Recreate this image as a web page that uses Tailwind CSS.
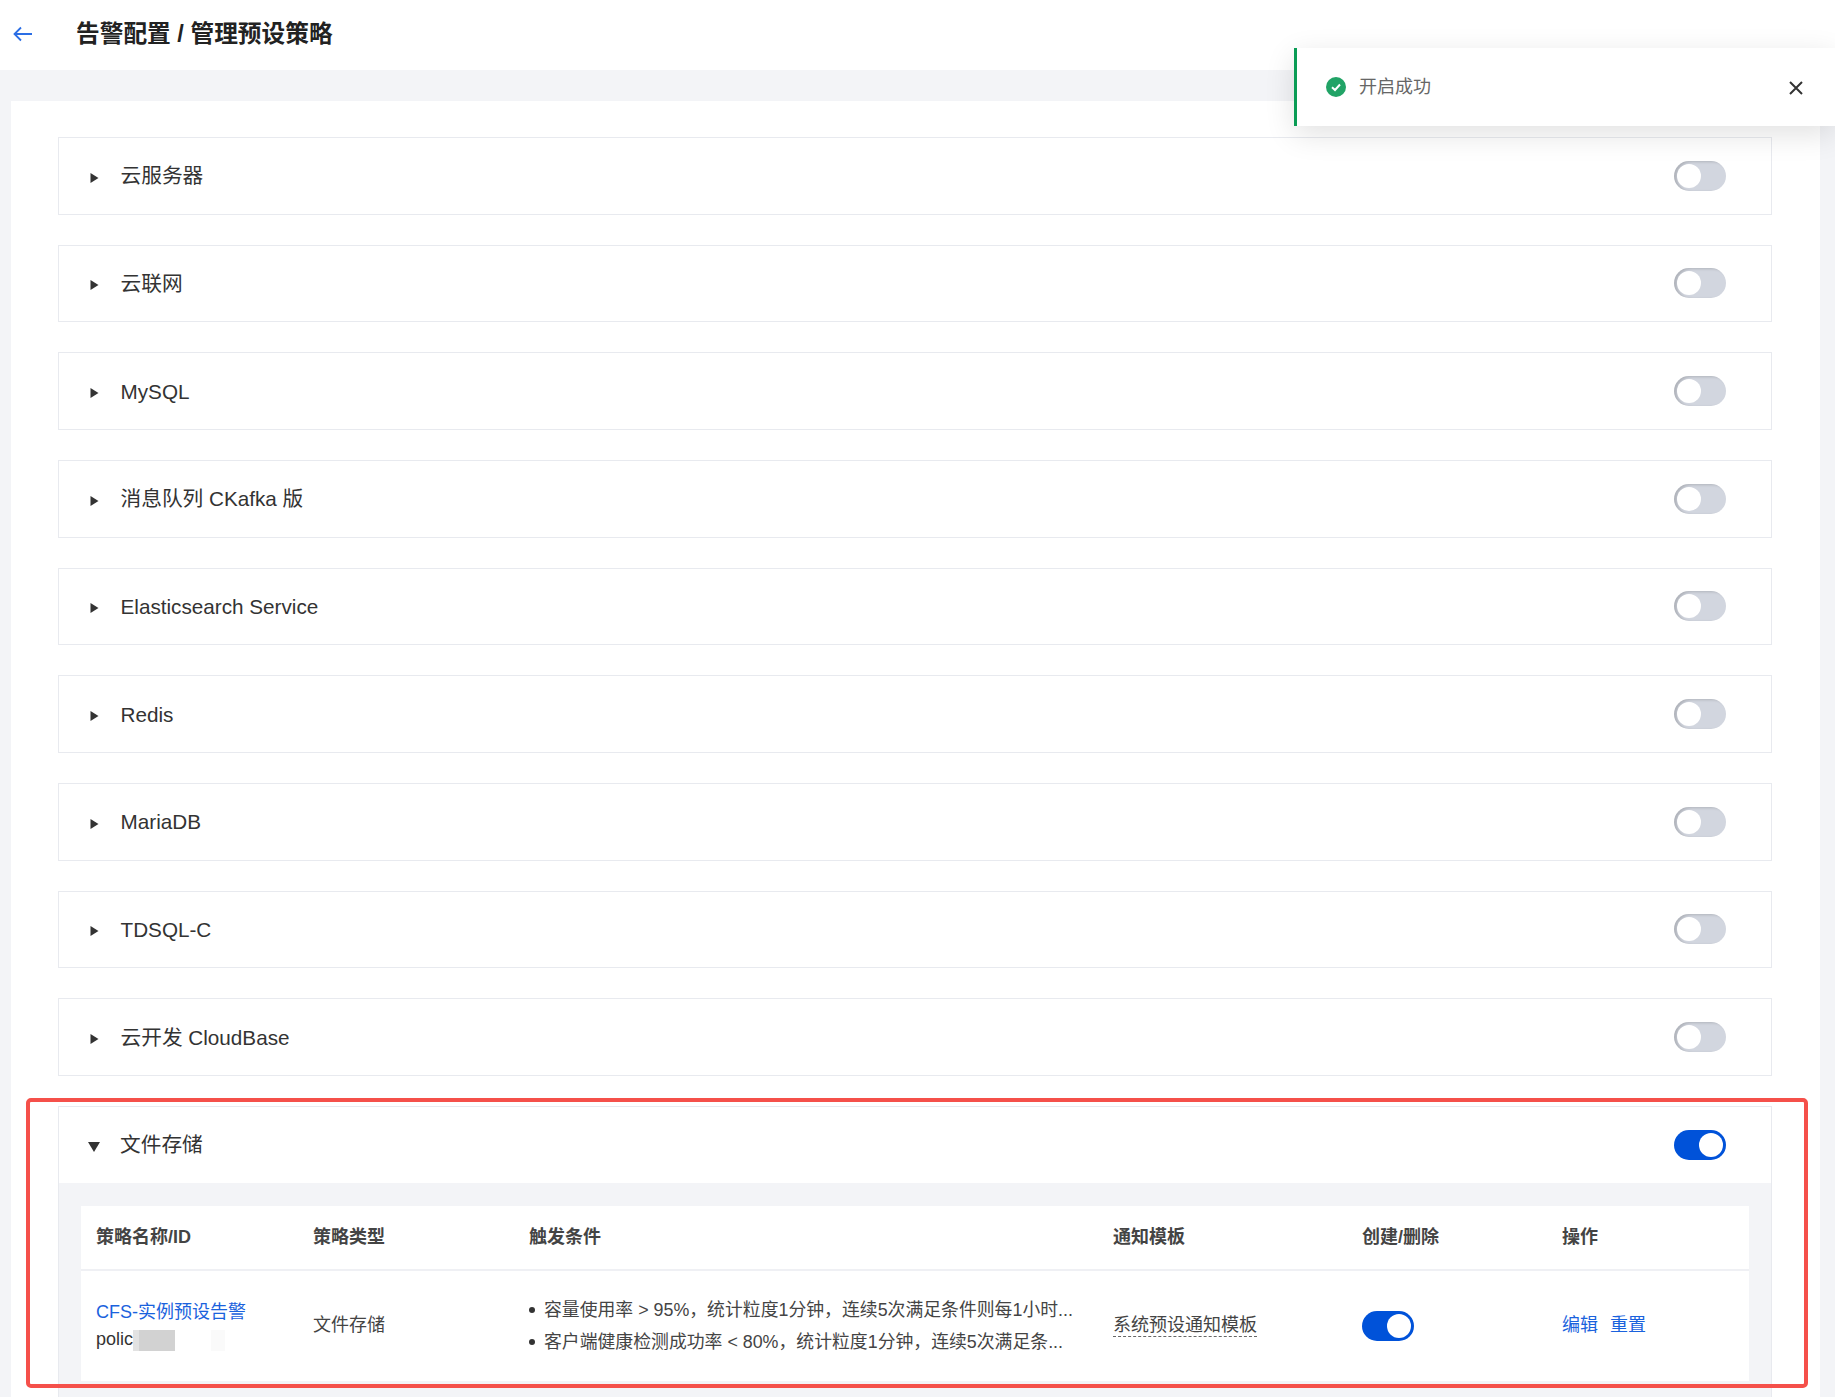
<!DOCTYPE html>
<html lang="zh-CN">
<head>
    <meta charset="UTF-8">
    <title>管理预设策略</title>
    <script src="https://cdn.jsdelivr.net/npm/@tailwindcss/browser@4"></script>
</head>
<body class="bg-[#f3f4f7] font-['Liberation_Sans','Noto_Sans_CJK_SC',sans-serif] text-[#333]">
<div class="relative w-[1835px] h-[1397px] overflow-hidden">

    <!-- 顶栏 -->
    <header class="h-[70px] bg-white flex items-center pl-[13px]">
        <svg class="w-[20px] h-[16px] -mt-[2px]" viewBox="0 0 20 16" fill="none" stroke="#2b6ee5" stroke-width="1.8">
            <path d="M19 8H1.5M8 1.5L1.5 8L8 14.5"/>
        </svg>
        <h1 class="ml-[43px] text-[23.7px] font-bold text-[#222]">告警配置 / 管理预设策略</h1>
    </header>

    <main class="pt-[31px] pl-[11px] pr-[15px]">
        <div class="bg-white pt-[36px] pl-[47px] pr-[48px] h-[1300px]">
            <div class="flex flex-col gap-[30px]">

                <div class="h-[77.67px] border border-[#e8eaef] flex items-center justify-between pl-[31px] pr-[45px]">
                    <div class="flex items-center">
                        <svg class="w-[9px] h-[10px] mt-[4px]" viewBox="0 0 9 10" fill="#333"><path d="M0.5 0L8.5 5L0.5 10Z"/></svg>
                        <span class="ml-[21.5px] mt-[2px] text-[20.7px] leading-none">云服务器</span>
                    </div>
                    <div class="w-[52px] h-[30px] rounded-full bg-[#d2d6df] p-[3px] shadow-[inset_3px_1px_3px_rgba(0,0,0,0.16)]"><div class="w-[24px] h-[24px] rounded-full bg-white"></div></div>
                </div>

                <div class="h-[77.67px] border border-[#e8eaef] flex items-center justify-between pl-[31px] pr-[45px]">
                    <div class="flex items-center">
                        <svg class="w-[9px] h-[10px] mt-[4px]" viewBox="0 0 9 10" fill="#333"><path d="M0.5 0L8.5 5L0.5 10Z"/></svg>
                        <span class="ml-[21.5px] mt-[2px] text-[20.7px] leading-none">云联网</span>
                    </div>
                    <div class="w-[52px] h-[30px] rounded-full bg-[#d2d6df] p-[3px] shadow-[inset_3px_1px_3px_rgba(0,0,0,0.16)]"><div class="w-[24px] h-[24px] rounded-full bg-white"></div></div>
                </div>

                <div class="h-[77.67px] border border-[#e8eaef] flex items-center justify-between pl-[31px] pr-[45px]">
                    <div class="flex items-center">
                        <svg class="w-[9px] h-[10px] mt-[4px]" viewBox="0 0 9 10" fill="#333"><path d="M0.5 0L8.5 5L0.5 10Z"/></svg>
                        <span class="ml-[21.5px] mt-[2px] text-[20.7px] leading-none">MySQL</span>
                    </div>
                    <div class="w-[52px] h-[30px] rounded-full bg-[#d2d6df] p-[3px] shadow-[inset_3px_1px_3px_rgba(0,0,0,0.16)]"><div class="w-[24px] h-[24px] rounded-full bg-white"></div></div>
                </div>

                <div class="h-[77.67px] border border-[#e8eaef] flex items-center justify-between pl-[31px] pr-[45px]">
                    <div class="flex items-center">
                        <svg class="w-[9px] h-[10px] mt-[4px]" viewBox="0 0 9 10" fill="#333"><path d="M0.5 0L8.5 5L0.5 10Z"/></svg>
                        <span class="ml-[21.5px] mt-[2px] text-[20.7px] leading-none">消息队列 CKafka 版</span>
                    </div>
                    <div class="w-[52px] h-[30px] rounded-full bg-[#d2d6df] p-[3px] shadow-[inset_3px_1px_3px_rgba(0,0,0,0.16)]"><div class="w-[24px] h-[24px] rounded-full bg-white"></div></div>
                </div>

                <div class="h-[77.67px] border border-[#e8eaef] flex items-center justify-between pl-[31px] pr-[45px]">
                    <div class="flex items-center">
                        <svg class="w-[9px] h-[10px] mt-[4px]" viewBox="0 0 9 10" fill="#333"><path d="M0.5 0L8.5 5L0.5 10Z"/></svg>
                        <span class="ml-[21.5px] mt-[2px] text-[20.7px] leading-none">Elasticsearch Service</span>
                    </div>
                    <div class="w-[52px] h-[30px] rounded-full bg-[#d2d6df] p-[3px] shadow-[inset_3px_1px_3px_rgba(0,0,0,0.16)]"><div class="w-[24px] h-[24px] rounded-full bg-white"></div></div>
                </div>

                <div class="h-[77.67px] border border-[#e8eaef] flex items-center justify-between pl-[31px] pr-[45px]">
                    <div class="flex items-center">
                        <svg class="w-[9px] h-[10px] mt-[4px]" viewBox="0 0 9 10" fill="#333"><path d="M0.5 0L8.5 5L0.5 10Z"/></svg>
                        <span class="ml-[21.5px] mt-[2px] text-[20.7px] leading-none">Redis</span>
                    </div>
                    <div class="w-[52px] h-[30px] rounded-full bg-[#d2d6df] p-[3px] shadow-[inset_3px_1px_3px_rgba(0,0,0,0.16)]"><div class="w-[24px] h-[24px] rounded-full bg-white"></div></div>
                </div>

                <div class="h-[77.67px] border border-[#e8eaef] flex items-center justify-between pl-[31px] pr-[45px]">
                    <div class="flex items-center">
                        <svg class="w-[9px] h-[10px] mt-[4px]" viewBox="0 0 9 10" fill="#333"><path d="M0.5 0L8.5 5L0.5 10Z"/></svg>
                        <span class="ml-[21.5px] mt-[2px] text-[20.7px] leading-none">MariaDB</span>
                    </div>
                    <div class="w-[52px] h-[30px] rounded-full bg-[#d2d6df] p-[3px] shadow-[inset_3px_1px_3px_rgba(0,0,0,0.16)]"><div class="w-[24px] h-[24px] rounded-full bg-white"></div></div>
                </div>

                <div class="h-[77.67px] border border-[#e8eaef] flex items-center justify-between pl-[31px] pr-[45px]">
                    <div class="flex items-center">
                        <svg class="w-[9px] h-[10px] mt-[4px]" viewBox="0 0 9 10" fill="#333"><path d="M0.5 0L8.5 5L0.5 10Z"/></svg>
                        <span class="ml-[21.5px] mt-[2px] text-[20.7px] leading-none">TDSQL-C</span>
                    </div>
                    <div class="w-[52px] h-[30px] rounded-full bg-[#d2d6df] p-[3px] shadow-[inset_3px_1px_3px_rgba(0,0,0,0.16)]"><div class="w-[24px] h-[24px] rounded-full bg-white"></div></div>
                </div>

                <div class="h-[77.67px] border border-[#e8eaef] flex items-center justify-between pl-[31px] pr-[45px]">
                    <div class="flex items-center">
                        <svg class="w-[9px] h-[10px] mt-[4px]" viewBox="0 0 9 10" fill="#333"><path d="M0.5 0L8.5 5L0.5 10Z"/></svg>
                        <span class="ml-[21.5px] mt-[2px] text-[20.7px] leading-none">云开发 CloudBase</span>
                    </div>
                    <div class="w-[52px] h-[30px] rounded-full bg-[#d2d6df] p-[3px] shadow-[inset_3px_1px_3px_rgba(0,0,0,0.16)]"><div class="w-[24px] h-[24px] rounded-full bg-white"></div></div>
                </div>

                <!-- 展开的一行 -->
                <div class="border border-[#e8eaef] bg-[#f3f4f7]">
                    <div class="h-[76px] bg-white flex items-center justify-between pl-[29px] pr-[45px]">
                        <div class="flex items-center">
                            <svg class="w-[12px] h-[10px] mt-[4px]" viewBox="0 0 12 10" fill="#333"><path d="M0 0H12L6 10Z"/></svg>
                            <span class="ml-[20px] text-[20.7px] leading-none">文件存储</span>
                        </div>
                        <div class="w-[52px] h-[30px] rounded-full bg-[#0052d9] p-[3px] flex justify-end"><div class="w-[24px] h-[24px] rounded-full bg-white"></div></div>
                    </div>

                    <div class="pt-[23px] pl-[22px] pr-[22px] pb-[40px]">
                        <div class="bg-white text-[18px]">
                            <div class="h-[65px] grid grid-cols-[217px_216px_584px_249px_200px_1fr] items-center border-b-2 border-[#eff0f4] font-semibold text-[#444] pl-[15px]">
                                <div>策略名称/ID</div>
                                <div>策略类型</div>
                                <div>触发条件</div>
                                <div>通知模板</div>
                                <div>创建/删除</div>
                                <div>操作</div>
                            </div>
                            <div class="h-[110px] grid grid-cols-[217px_216px_584px_249px_200px_1fr] items-center pl-[15px] text-[#444]">
                                <div class="leading-[27px]">
                                    <div class="text-[#1a62dd]">CFS-实例预设告警</div>
                                    <div class="flex items-start text-[#333]">
                                        <span>polic</span>
                                        <div class="flex h-[21px] mt-[4px] items-stretch">
                                            <div class="w-[6px] bg-[#e2e2e2]"></div>
                                            <div class="w-[36px] bg-[#d2d2d2]"></div>
                                            <div class="w-[36px] bg-white"></div>
                                            <div class="w-[14px] bg-[#fafafa]"></div>
                                        </div>
                                    </div>
                                </div>
                                <div>文件存储</div>
                                <ul class="leading-[32px] mt-[1px] text-[17.85px] whitespace-nowrap">
                                    <li class="flex items-center">
                                        <span class="w-[6px] h-[6px] rounded-full bg-[#333] shrink-0"></span>
                                        <span class="ml-[9px]">容量使用率 &gt; 95%，统计粒度1分钟，连续5次满足条件则每1小时...</span>
                                    </li>
                                    <li class="flex items-center">
                                        <span class="w-[6px] h-[6px] rounded-full bg-[#333] shrink-0"></span>
                                        <span class="ml-[9px]">客户端健康检测成功率 &lt; 80%，统计粒度1分钟，连续5次满足条...</span>
                                    </li>
                                </ul>
                                <div><span class="border-b border-dashed border-[#666] pb-[1px]">系统预设通知模板</span></div>
                                <div class="w-[52px] h-[30px] rounded-full bg-[#0052d9] p-[3px] flex justify-end"><div class="w-[24px] h-[24px] rounded-full bg-white"></div></div>
                                <div class="flex gap-[12px] text-[#1a62dd]">
                                    <a>编辑</a>
                                    <a>重置</a>
                                </div>
                            </div>
                        </div>
                    </div>
                </div>

            </div>
        </div>
    </main>

    <!-- 提示 -->
    <div class="absolute left-[1294px] top-[48px] w-[541px] h-[78px] bg-white border-l-[3px] border-[#0a9c55] shadow-[0_8px_30px_rgba(0,0,0,0.12)] flex items-center pl-[29px] pr-[32px]">
        <svg class="w-[20px] h-[20px] shrink-0" viewBox="0 0 20 20">
            <circle cx="10" cy="10" r="10" fill="#21a366"/>
            <path d="M6 10.3L9 13L14 7.5" fill="none" stroke="#fff" stroke-width="2"/>
        </svg>
        <span class="ml-[13px] text-[18px] text-[#666]">开启成功</span>
        <svg class="ml-auto mt-[2px] w-[14px] h-[14px]" viewBox="0 0 14 14" stroke="#333" stroke-width="2"><path d="M1 1L13 13M13 1L1 13"/></svg>
    </div>

    <!-- 截图上的红框 -->
    <div class="absolute left-[26px] top-[1098px] w-[1782px] h-[290px] border-[4px] border-[#f5504a] rounded-[5px]"></div>
</div>
</body>
</html>
